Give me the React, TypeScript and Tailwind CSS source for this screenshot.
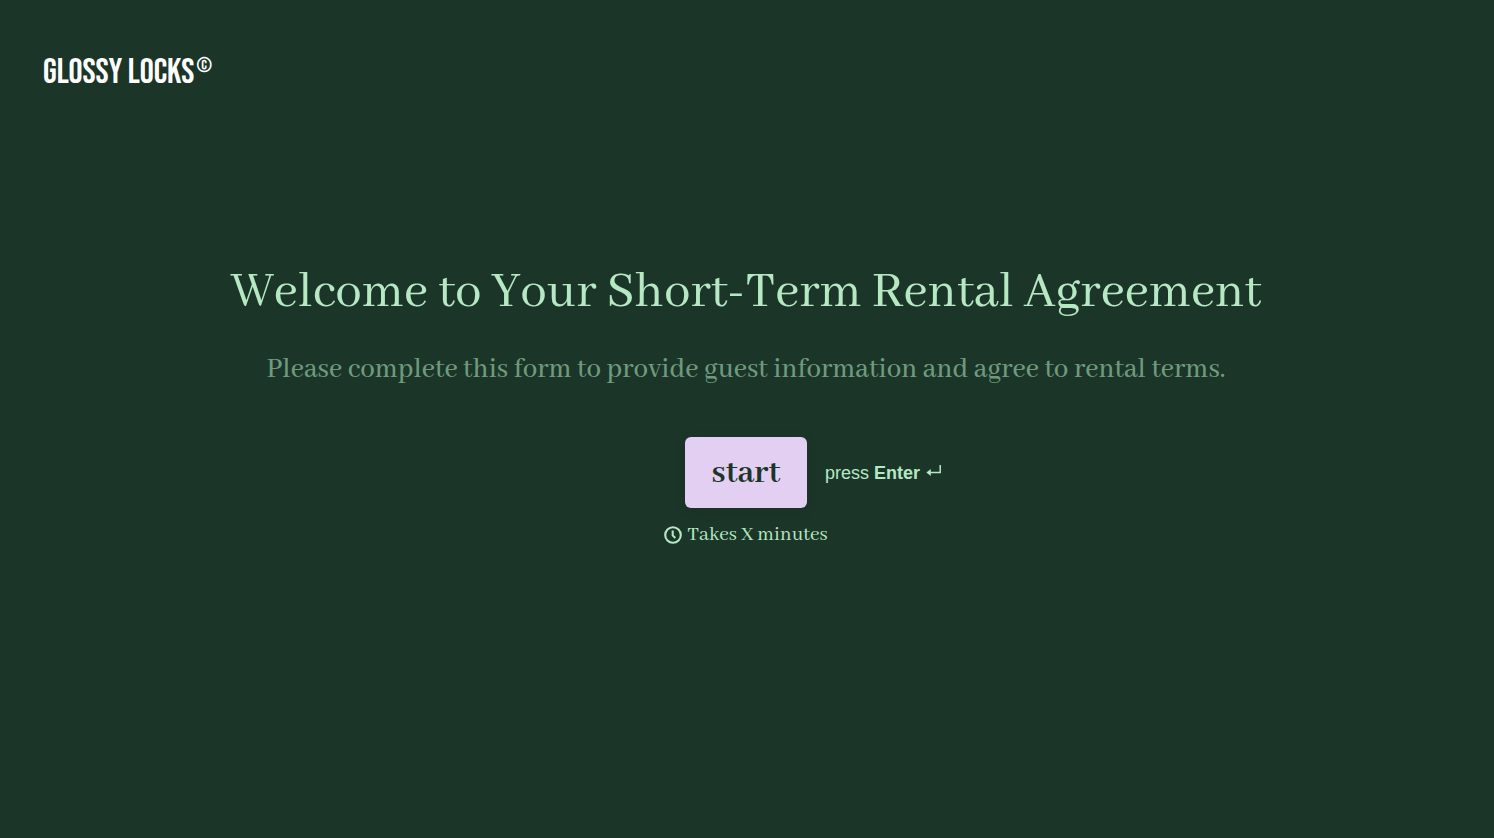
import { useEffect, useState } from "react";

function Logo() {
  return (
    <a
      href="#home"
      aria-label="Glossy Locks home"
      className="flex items-start gap-[2px] font-['Bebas_Neue','Liberation_Sans',sans-serif] text-white"
    >
      <span className="text-[35px] leading-[34px] whitespace-nowrap">GLOSSY LOCKS</span>
      <span className="text-[21px] leading-5">©</span>
    </a>
  );
}

function EnterIcon() {
  return (
    <svg viewBox="0 0 16 12" className="mb-1 h-3 w-4" fill="none" aria-hidden="true">
      <path d="M14.2 0V7.5H3" stroke="currentColor" strokeWidth="1.5" />
      <path d="M4.8 3.9V11.1L0.4 7.5Z" fill="currentColor" />
    </svg>
  );
}

function ClockIcon() {
  return (
    <svg viewBox="0 0 18 18" className="size-[18px]" fill="none" stroke="currentColor" aria-hidden="true">
      <circle cx="9" cy="9" r="7.8" strokeWidth="2.1" />
      <path d="M8.7 4.6V9.4L11.3 12" strokeWidth="2.1" />
    </svg>
  );
}

export default function App() {
  const [started, setStarted] = useState(false);

  useEffect(() => {
    const onKey = (event: KeyboardEvent) => {
      if (event.key === "Enter") setStarted(true);
    };
    window.addEventListener("keydown", onKey);
    return () => window.removeEventListener("keydown", onKey);
  }, []);

  return (
    <div className="flex min-h-screen flex-col bg-[#1c3529] font-['Abhaya_Libre','Liberation_Serif',serif] text-[#b5e8c3]">
      <header className="flex px-[43px] pt-14">
        <Logo />
      </header>
      <main className="flex flex-1 flex-col items-center pt-[171px] pr-[42px] pl-10 text-center">
        <h1 className="text-[53px] leading-[64px]">Welcome to Your Short-Term Rental Agreement</h1>
        <p className="mt-7 text-[29px] leading-[34px] font-medium text-[#6f9a7e]">
          Please complete this form to provide guest information and agree to rental terms.
        </p>
        <div className="mt-[50px] grid w-full grid-cols-[1fr_auto_1fr] items-center gap-[18px]">
          <button
            type="button"
            aria-pressed={started}
            onClick={() => setStarted(true)}
            className="col-start-2 h-[71px] w-[122px] rounded-md bg-[#e3cff2] pt-[2px] text-[35px] leading-10 font-bold text-[#1c3529] shadow-[0_3px_12px_rgba(0,0,0,0.1)]"
          >
            start
          </button>
          <div className="flex items-center gap-[6px] font-['Liberation_Sans',sans-serif] text-[18px] leading-6">
            <span>
              press <strong>Enter</strong>
            </span>
            <EnterIcon />
          </div>
        </div>
        <div className="mt-[15px] flex items-center gap-[5px] text-[21px] leading-6">
          <ClockIcon />
          <span>Takes X minutes</span>
        </div>
      </main>
    </div>
  );
}
